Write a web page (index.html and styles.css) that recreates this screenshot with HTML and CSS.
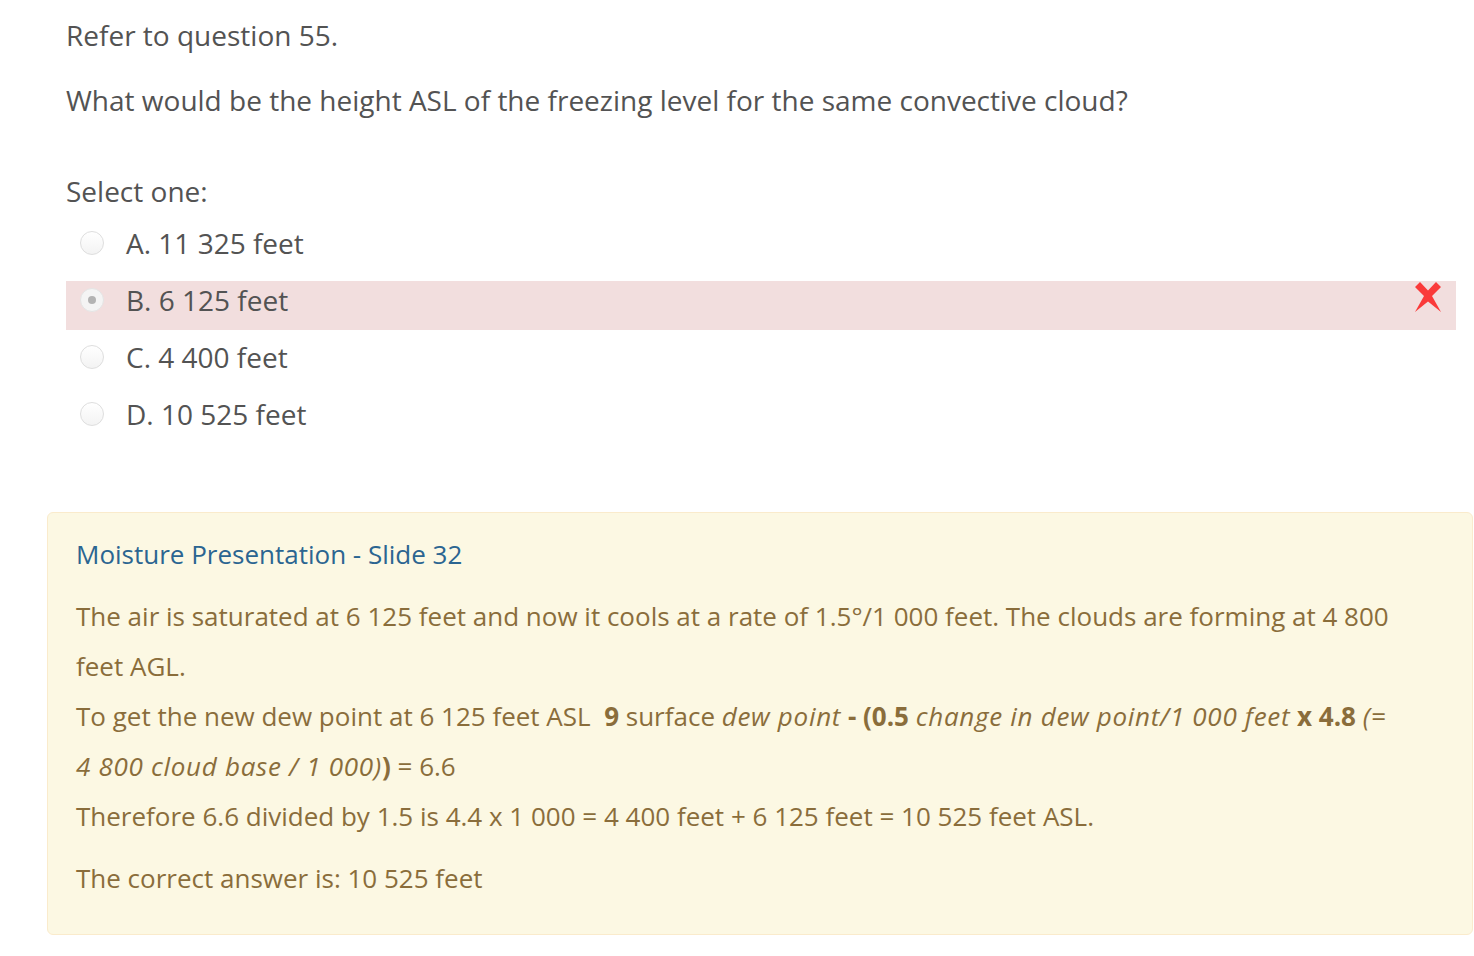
FILE: index.html
```html
<!DOCTYPE html>
<html>
<head>
<meta charset="utf-8">
<link rel="stylesheet" href="styles.css">
</head>
<body>
<div class="page">
  <div class="qtext">
    <p>Refer to question 55.</p>
    <p>What would be the height ASL of the freezing level for the same convective cloud?</p>
  </div>
  <div class="prompt">Select one:</div>
  <div class="answers">
    <div class="opt"><span class="radio"></span><span class="label">A. 11 325 feet</span></div>
    <div class="opt incorrect"><span class="radio checked"></span><span class="label">B. 6 125 feet</span>
      <svg class="xicon" width="28" height="31" viewBox="0 0 28 31"><polygon points="1,5 6,0 14,8.5 22,0 27,5 18,14 27,30 14,19.5 1,30 10,14" fill="#fa3a3a"/></svg>
    </div>
    <div class="opt"><span class="radio"></span><span class="label">C. 4 400 feet</span></div>
    <div class="opt"><span class="radio"></span><span class="label">D. 10 525 feet</span></div>
  </div>
  <div class="feedback">
    <div class="fb-title"><a href="#">Moisture Presentation - Slide 32</a></div>
    <div class="fb-body">
      <p>The air is saturated at 6 125 feet and now it cools at a rate of 1.5°/1 000 feet. The clouds are forming at 4 800 feet AGL.</p>
      <p>To get the new dew point at 6 125 feet ASL&nbsp; <b>9</b> surface <i>dew point</i> <b>- (0.5</b> <i>change in dew point/1 000 feet</i> <b>x 4.8</b> <i>(= 4 800 cloud base / 1 000)</i><b>)</b> = 6.6</p>
      <p>Therefore 6.6 divided by 1.5 is 4.4 x 1 000 = 4 400 feet + 6 125 feet = 10 525 feet ASL.</p>
    </div>
    <div class="fb-right">The correct answer is: 10 525 feet</div>
  </div>
</div>
</body>
</html>
```
FILE: styles.css
```css
html, body {
  margin: 0;
  padding: 0;
  background: #ffffff;
}
body {
  font-family: "Open Sans", "Noto Sans", sans-serif;
  font-size: 28px;
  line-height: 42px;
  color: #535353;
}
.page {
  padding: 14px 18px 0 66px;
}
.qtext p {
  margin: 0 0 23px 0;
}
.qtext p:last-child {
  margin-bottom: 0;
}
.prompt {
  margin-top: 49px;
}
.answers {
  margin-top: 12px;
  display: flex;
  flex-direction: column;
  gap: 8px;
}
.opt {
  display: flex;
  align-items: center;
  height: 49px;
  box-sizing: border-box;
  padding: 0 0 12px 14px;
  position: relative;
}
.opt.incorrect {
  background: #f2dede;
}
.radio {
  width: 24px;
  height: 24px;
  box-sizing: border-box;
  border-radius: 50%;
  border: 1px solid #dedede;
  background: linear-gradient(#ffffff, #f3f3f3);
  margin-right: 22px;
  position: relative;
  flex: none;
}
.radio.checked {
  background: #f4f4f4;
  border-color: #e4e4e4;
}
.radio.checked::after {
  content: "";
  position: absolute;
  width: 8px;
  height: 8px;
  border-radius: 50%;
  background: #b3b3b3;
  left: 7px;
  top: 7px;
}
.xicon {
  position: absolute;
  right: 14px;
  top: 1px;
}
.feedback {
  margin: 68px -17px 0 -19px;
  background: #fcf8e3;
  border: 1px solid #faebcc;
  border-radius: 6px;
  padding: 22px 28px 36px 28px;
  color: #8a6d3b;
  font-size: 26px;
  line-height: 39px;
}
.fb-title a {
  color: #2b6591;
  text-decoration: none;
}
.fb-body {
  margin-top: 17px;
  width: 1322px;
}
.fb-body p {
  margin: 0;
  line-height: 50px;
}
.fb-body b {
  font-weight: 700;
}
.fb-body i {
  letter-spacing: 0.7px;
}
.fb-right {
  margin-top: 18px;
}
```
